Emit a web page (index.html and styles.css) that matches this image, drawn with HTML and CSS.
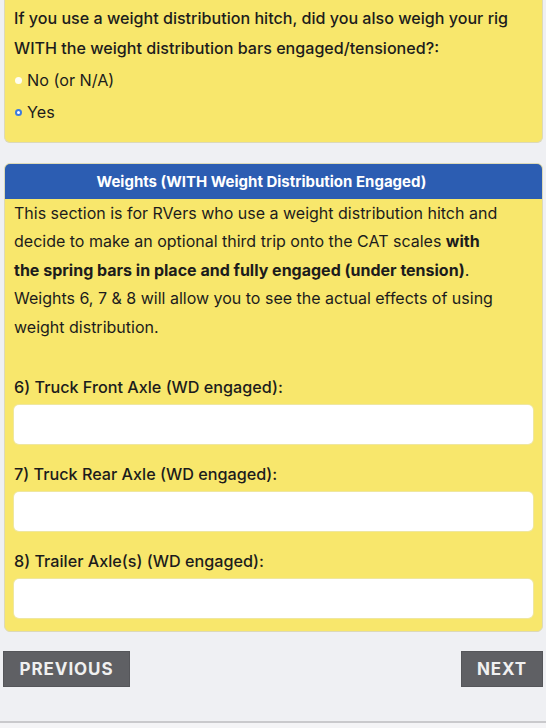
FILE: index.html
```html
<!DOCTYPE html>
<html>
<head>
<meta charset="utf-8">
<link rel="stylesheet" href="styles.css">
</head>
<body>
<div class="page">
  <div class="panel panel-top">
    <p class="question">If you use a weight distribution hitch, did you also weigh your rig WITH the weight distribution bars engaged/tensioned?:</p>
    <label class="radio-row"><span class="radio"></span>No (or N/A)</label>
    <label class="radio-row"><span class="radio checked"></span>Yes</label>
  </div>

  <div class="panel panel-section">
    <div class="section-head">Weights (WITH Weight Distribution Engaged)</div>
    <div class="section-body">
      <p class="intro">This section is for RVers who use a weight distribution hitch and decide to make an optional third trip onto the CAT scales <b>with the spring bars in place and fully engaged (under tension)</b>. Weights 6, 7 &amp; 8 will allow you to see the actual effects of using weight distribution.</p>
      <div class="field first">
        <div class="field-label">6) Truck Front Axle (WD engaged):</div>
        <div class="input"></div>
      </div>
      <div class="field">
        <div class="field-label">7) Truck Rear Axle (WD engaged):</div>
        <div class="input"></div>
      </div>
      <div class="field">
        <div class="field-label">8) Trailer Axle(s) (WD engaged):</div>
        <div class="input"></div>
      </div>
    </div>
  </div>

  <div class="nav">
    <button class="btn btn-prev">PREVIOUS</button>
    <button class="btn btn-next">NEXT</button>
  </div>
</div>
<div class="footer-line"></div>
</body>
</html>
```

FILE: styles.css
```css
html, body {
  margin: 0;
  padding: 0;
  background: #eff0f3;
}
body {
  font-family: Inter, "Liberation Sans", Arial, sans-serif;
  color: #1c1c1c;
  width: 546px;
  height: 728px;
  overflow: hidden;
  position: relative;
}
.page {
  padding: 0 3px 0 4px;
}
.panel {
  background: #f8e76c;
  border: 1px solid #dcd9b8;
  border-radius: 6px;
}
.panel-top {
  border-top: none;
  border-top-left-radius: 0;
  border-top-right-radius: 0;
  padding: 3px 9px 16px 9px;
  height: 123px;
}
.question {
  margin: 0;
  font-size: 16.1px;
  font-weight: 500;
  line-height: 30px;
}
.radio-row {
  display: flex;
  align-items: center;
  font-size: 16.2px;
  line-height: 30px;
  height: 30px;
  margin-top: 2px;
}
.radio {
  width: 7px;
  height: 7px;
  border-radius: 50%;
  background: #fffef2;
  margin-right: 5px;
  margin-left: 1px;
  box-sizing: border-box;
}
.radio.checked {
  background: #fff;
  border: 2px solid #3c7be0;
}
.panel-section {
  margin-top: 20px;
  overflow: hidden;
  height: 469px;
  box-sizing: border-box;
}
.section-head {
  background: #2c5db2;
  color: #fff;
  font-weight: 700;
  font-size: 15px;
  height: 35px;
  line-height: 35px;
  text-align: center;
  padding-right: 24px;
}
.section-body {
  padding: 0 9px 17px 9px;
}
.intro {
  margin: 0;
  padding-right: 30px;
  font-size: 16px;
  line-height: 28.4px;
}
.intro b {
  font-weight: 700;
}
.field {
  margin-top: 15px;
}
.field.first {
  margin-top: 31px;
}
.field-label {
  font-size: 16.2px;
  font-weight: 500;
  line-height: 30px;
  height: 30px;
  margin-bottom: 3px;
}
.input {
  height: 39px;
  background: #fff;
  border-radius: 5px;
  box-shadow: 0 0 0 1px #efe7a0;
}
.nav {
  display: flex;
  justify-content: space-between;
  margin-top: 19px;
  margin-left: -1px;
  margin-right: 0;
}
.btn {
  border: 1px solid #55565a;
  background: #5f6064;
  color: #f0f0f0;
  font-family: Inter, "Liberation Sans", Arial, sans-serif;
  font-weight: 700;
  font-size: 17px;
  letter-spacing: 0.9px;
  height: 36px;
  padding: 0;
  border-radius: 0;
}
.btn-prev {
  width: 127px;
}
.btn-next {
  width: 82px;
}
.footer-line {
  position: absolute;
  left: 0;
  right: 0;
  top: 721px;
  height: 7px;
  border-top: 2px solid #c9c9cc;
  background: #f4f4f6;
}
```
